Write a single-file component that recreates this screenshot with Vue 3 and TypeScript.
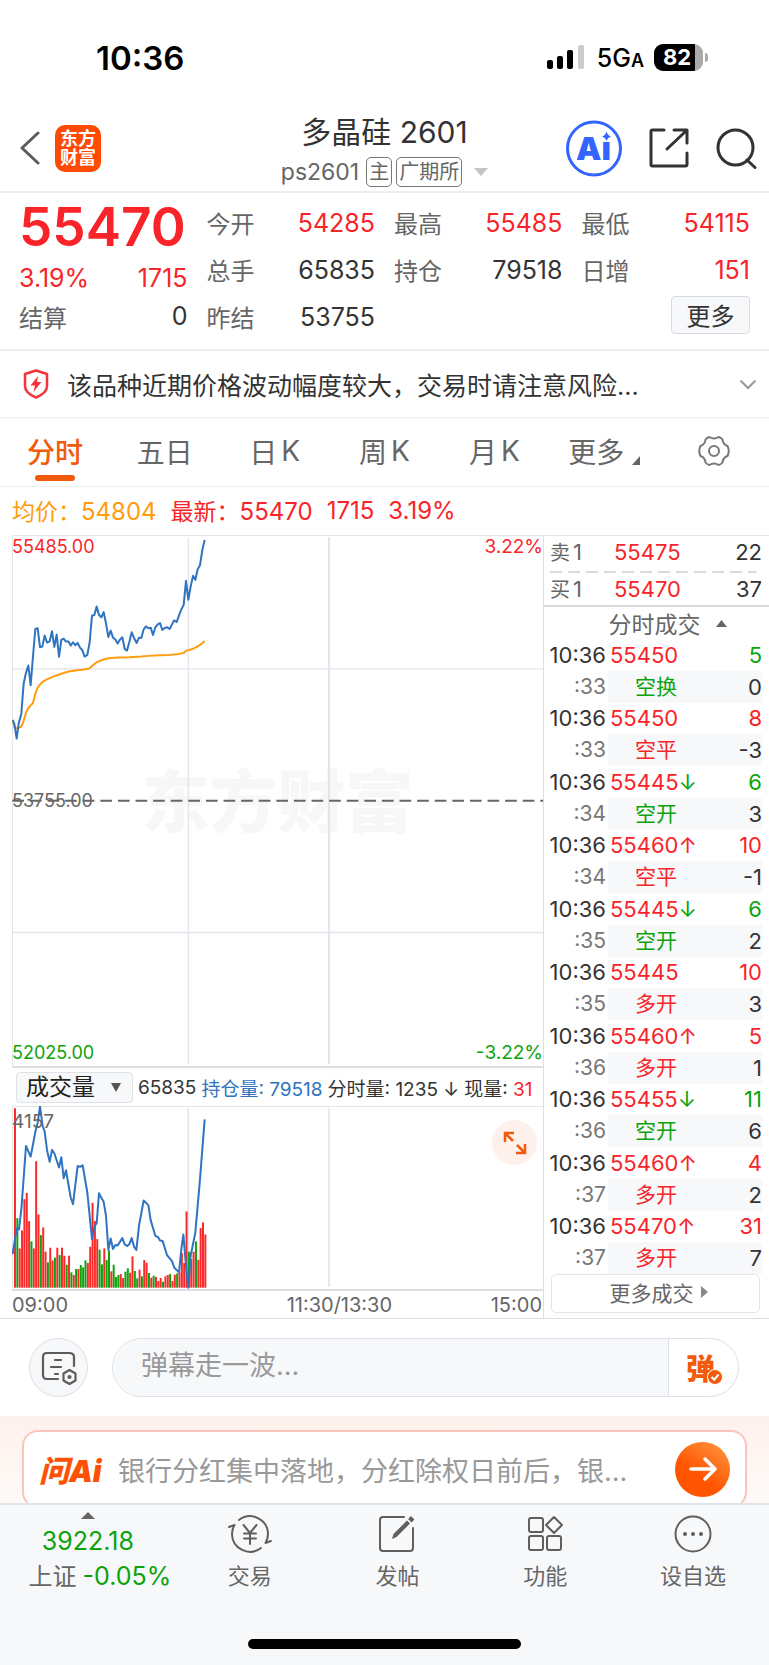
<script setup lang="ts">
import { ref } from 'vue'

type Tone = 'red' | 'green' | 'dark'

interface Quote {
  label: string
  value: string
  tone: Tone
}

interface Trade {
  price: string
  arrow: '' | '↑' | '↓'
  volume: string
  volumeTone: Tone
  second: string
  kind: string
  kindTone: Tone
  change: string
}

const quoteColumns: Quote[][] = [
  [
    { label: '今开', value: '54285', tone: 'red' },
    { label: '总手', value: '65835', tone: 'dark' },
    { label: '昨结', value: '53755', tone: 'dark' },
  ],
  [
    { label: '最高', value: '55485', tone: 'red' },
    { label: '持仓', value: '79518', tone: 'dark' },
  ],
  [
    { label: '最低', value: '54115', tone: 'red' },
    { label: '日增', value: '151', tone: 'red' },
  ],
]

const tabs = [
  { name: '分时', unit: '' },
  { name: '五日', unit: '' },
  { name: '日', unit: 'K' },
  { name: '周', unit: 'K' },
  { name: '月', unit: 'K' },
  { name: '更多', unit: '' },
]
const activeTab = ref('分时')
const indicator = ref('成交量')
const comment = ref('')

const book = [
  { side: '卖', price: '55475', size: '22' },
  { side: '买', price: '55470', size: '37' },
]

const trades: Trade[] = [
  { price: '55450', arrow: '', volume: '5', volumeTone: 'green', second: ':33', kind: '空换', kindTone: 'green', change: '0' },
  { price: '55450', arrow: '', volume: '8', volumeTone: 'red', second: ':33', kind: '空平', kindTone: 'red', change: '-3' },
  { price: '55445', arrow: '↓', volume: '6', volumeTone: 'green', second: ':34', kind: '空开', kindTone: 'green', change: '3' },
  { price: '55460', arrow: '↑', volume: '10', volumeTone: 'red', second: ':34', kind: '空平', kindTone: 'red', change: '-1' },
  { price: '55445', arrow: '↓', volume: '6', volumeTone: 'green', second: ':35', kind: '空开', kindTone: 'green', change: '2' },
  { price: '55445', arrow: '', volume: '10', volumeTone: 'red', second: ':35', kind: '多开', kindTone: 'red', change: '3' },
  { price: '55460', arrow: '↑', volume: '5', volumeTone: 'red', second: ':36', kind: '多开', kindTone: 'red', change: '1' },
  { price: '55455', arrow: '↓', volume: '11', volumeTone: 'green', second: ':36', kind: '空开', kindTone: 'green', change: '6' },
  { price: '55460', arrow: '↑', volume: '4', volumeTone: 'red', second: ':37', kind: '多开', kindTone: 'red', change: '2' },
  { price: '55470', arrow: '↑', volume: '31', volumeTone: 'red', second: ':37', kind: '多开', kindTone: 'red', change: '7' },
]

const priceLine =
  '38,572 43,583 50,628 56,583 64,553 71,462 78,430 85,408 92,467 99,380 106,298 113,296 120,353 127,351 134,318 141,339 149,335 156,305 163,352 170,315 177,382 184,331 191,327 198,336 206,336 212,348 219,338 226,347 233,340 240,354 247,362 254,381 262,376 269,338 276,258 283,256 290,230 297,256 304,263 311,247 318,282 325,322 332,303 339,324 346,330 353,342 360,330 367,323 374,358 381,363 388,337 395,308 402,325 410,340 417,324 424,325 431,299 438,290 445,296 452,294 459,316 466,293 473,284 480,280 487,301 494,295 502,293 509,298 516,284 522,272 530,277 537,257 544,239 551,226 558,153 565,210 572,170 579,138 586,150 593,118 600,106 607,60 614,30'
const averageLine =
  '38,574 44,596 52,597 64,592 71,574 78,550 85,536 92,528 99,521 106,493 113,475 120,465 128,457 135,453 149,446 163,440 184,433 206,426 226,423 247,421 268,417 278,408 290,398 311,390 325,386 353,384 388,383 424,381 445,379 480,377 509,376 537,373 551,370 558,364 572,360 586,354 600,346 614,334'
const interestLine =
  '38,585 50,508 57,511 64,450 70,370 78,260 92,292 106,218 113,190 120,141 128,200 134,217 141,272 149,308 156,272 163,282 177,325 184,294 191,357 198,333 212,415 219,435 233,320 240,323 248,318 262,400 276,540 283,504 290,492 297,402 304,416 311,428 318,470 325,572 332,538 339,570 346,558 353,559 367,537 374,556 382,561 388,555 395,537 402,562 409,573 417,500 431,424 445,438 452,483 466,530 474,534 480,544 488,546 501,588 516,606 523,626 537,640 544,570 550,526 558,620 565,686 572,590 586,520 600,360 614,180'

const barTops: string[] =
  '147r 477g 568r 514r 420r 401r 486r 547g 568r 306r 466r 528g 505r 578r 610g 566r 604r 596g 566r 588g 566r 590r 617g 590r 640g 648r 630g 630r 618g 625g 604g 612r 563r 431r 486r 540r 572g 616g 568r 603g 574g 637r 617g 654g 648g 645r 657r 638g 628g 641r 592r 636g 658g 632r 652g 603r 611r 642g 656r 650g 654r 666r 657r 668g 652r 648r 645g 666r 647r 643g 640r 582r 612r 457r 578g 600r 578r 547g 602r 507r 490r 526r'.split(' ')

const bars = barTops.map((entry, i) => {
  const top = parseInt(entry, 10)
  return { x: 42 + i * 7.05, y: top, h: 686 - top, fill: entry.endsWith('g') ? '#0ca30c' : '#fa2a2a' }
})
</script>

<template>
  <div class="page">
    <div class="status">
      <time class="clock">10:36</time>
      <div class="status-right">
        <svg class="signal" viewBox="0 0 38 25" aria-hidden="true">
          <rect x="0" y="15" width="6" height="9" rx="2" />
          <rect x="10" y="11" width="6" height="13" rx="2" />
          <rect x="20" y="5" width="6" height="19" rx="2" />
          <rect x="31" y="0" width="6" height="24" rx="2" fill="#ccc" />
        </svg>
        <span class="network">5G<small>A</small></span>
        <span class="battery"><span class="level">82</span></span>
      </div>
    </div>

    <header class="header">
      <div class="header-left">
        <button class="plain" aria-label="返回">
          <svg width="20" height="34" viewBox="0 0 20 34"><path d="M18 2 2 17 18 32" fill="none" stroke="#5c5c5c" stroke-width="3" stroke-linecap="round" stroke-linejoin="round" /></svg>
        </button>
        <a class="brand" href="#"><span>东方</span><span>财富</span></a>
      </div>
      <div class="title">
        <h1>多晶硅 2601</h1>
        <div class="subtitle">
          <span class="code">ps2601</span><span class="tag">主</span><span class="tag">广期所</span>
          <svg class="down" width="14" height="8" viewBox="0 0 14 8"><path d="M0 0H14L7 8Z" fill="#c4c4c4" /></svg>
        </div>
      </div>
      <div class="header-right">
        <button class="plain" aria-label="AI 助手">
          <svg width="56" height="57" viewBox="0 0 56 57">
            <circle cx="28" cy="28.500" r="26.500" fill="#fff" stroke="#3464ff" stroke-width="3" />
            <text x="10" y="40" font-size="32" font-weight="900" fill="#3464ff" font-family="Inter, sans-serif">Ai</text>
            <rect x="34" y="12" width="12" height="10" fill="#fff" />
            <path d="M40.500 11.500Q41.500 15.500 45 16.500Q41.500 17.500 40.500 21Q39.500 17.500 36 16.500Q39.500 15.500 40.500 11.500Z" fill="#3464ff" />
          </svg>
        </button>
        <button class="plain" aria-label="分享">
          <svg width="40" height="40" viewBox="0 0 40 40" fill="none" stroke="#333" stroke-width="3" stroke-linecap="round" stroke-linejoin="round">
            <path d="M15 2H3.500Q2 2 2 3.500V36.500Q2 38 3.500 38H36.500Q38 38 38 36.500V25M25 2H38V15M37 3 18 21" />
          </svg>
        </button>
        <button class="plain" aria-label="搜索">
          <svg width="41" height="41" viewBox="0 0 41 41" fill="none" stroke="#333" stroke-width="3" stroke-linecap="round">
            <circle cx="19.500" cy="19.500" r="17.500" /><path d="M31 32 39 39.500" />
          </svg>
        </button>
      </div>
    </header>

    <section class="quote">
      <div class="quote-main">
        <strong>55470</strong>
        <div class="pair delta red"><span>3.19%</span><span>1715</span></div>
        <div class="pair settle"><span class="label">结算</span><span class="dark">0</span></div>
      </div>
      <div v-for="(column, i) in quoteColumns" :key="i" class="quote-col">
        <div v-for="q in column" :key="q.label" class="pair">
          <span class="label">{{ q.label }}</span><span :class="q.tone">{{ q.value }}</span>
        </div>
        <button v-if="i === 2" class="more">更多</button>
      </div>
    </section>

    <section class="notice">
      <svg width="26" height="30" viewBox="0 0 26 30"><path d="M13 1.500 24 5V17Q24 24 13 28.500Q2 24 2 17V5Z" fill="none" stroke="#f5333a" stroke-width="2.500" stroke-linejoin="round" /><path d="M15 7 7.500 16.500H12L10.500 23 18.500 13H14Z" fill="#f5333a" /></svg>
      <p>该品种近期价格波动幅度较大，交易时请注意风险...</p>
      <button class="plain" aria-label="展开">
        <svg width="18" height="11" viewBox="0 0 18 11"><path d="M1.500 1.500 9 9 16.500 1.500" fill="none" stroke="#999" stroke-width="2" /></svg>
      </button>
    </section>

    <nav class="tabs">
      <button v-for="tab in tabs" :key="tab.name" :class="{ active: tab.name === activeTab }" @click="activeTab = tab.name">
        {{ tab.name }}<span v-if="tab.unit">{{ tab.unit }}</span><svg v-if="tab.name === '更多'" width="8" height="9" viewBox="0 0 8 9"><path d="M8 0V9H0Z" fill="#666" /></svg>
      </button>
      <button aria-label="设置">
        <svg width="34" height="32" viewBox="0 0 34 32" fill="none" stroke="#777" stroke-width="2" stroke-linejoin="round">
          <path d="M12.500 2Q17 5 21.500 2Q24 2.500 25.500 4.500Q26 9.500 30.500 11Q33 16 30.500 21Q26 22.500 25.500 27.500Q24 29.500 21.500 30Q17 27 12.500 30Q10 29.500 8.500 27.500Q8 22.500 3.500 21Q1 16 3.500 11Q8 9.500 8.500 4.500Q10 2.500 12.500 2Z" />
          <circle cx="17" cy="16" r="5" />
        </svg>
      </button>
    </nav>

    <div class="legend">
      <span class="orange">均价：<b>54804</b></span><span>最新：<b>55470</b></span><b>1715</b><b>3.19%</b>
    </div>

    <main class="market">
      <section class="charts">
        <div class="price-chart">
          <span class="watermark">东方财富</span>
          <svg viewBox="36 15 1593 1599" preserveAspectRatio="none" aria-label="分时走势">
            <g stroke="#e3e5ec" stroke-width="6">
              <path d="M36 418H1629M36 1212H1629M565 21V1608" stroke-width="4" /><path d="M987 21V1608" />
            </g>
            <path d="M37 815H1629" stroke="#666" stroke-width="6" stroke-dasharray="35 17.800" />
            <g fill="none" stroke-linejoin="round">
              <polyline :points="averageLine" stroke="#ff9c0f" stroke-width="6" />
              <polyline :points="priceLine" stroke="#2f74c0" stroke-width="6" />
            </g>
          </svg>
          <span class="mark top left red">55485.00</span>
          <span class="mark top right red">3.22%</span>
          <span class="mark middle left">53755.00</span>
          <span class="mark bottom left green">52025.00</span>
          <span class="mark bottom right green">-3.22%</span>
        </div>
        <div class="volume-bar">
          <label class="picker">
            <select v-model="indicator" aria-label="指标"><option>成交量</option></select>
            <svg width="10" height="9" viewBox="0 0 10 9"><path d="M0 0H10L5 9Z" fill="#555" /></svg>
          </label>
          <span>65835</span><span class="blue">持仓量: 79518</span><span>分时量: 1235 ↓</span><span>现量: <b>31</b></span>
        </div>
        <div class="volume-chart">
          <svg viewBox="36 140 1593 550" preserveAspectRatio="none" aria-label="成交量">
            <path d="M565 147V684M987 147V684" stroke="#e3e5ec" stroke-width="5" />
            <rect v-for="bar in bars" :key="bar.x" :x="bar.x" :y="bar.y" width="6" :height="bar.h" :fill="bar.fill" />
            <polyline :points="interestLine" fill="none" stroke="#2f74c0" stroke-width="6" stroke-linejoin="round" />
          </svg>
          <span class="peak">4157</span>
          <button class="expand" aria-label="全屏">
            <svg width="24" height="24" viewBox="0 0 24 24" fill="none" stroke="#f25a0c" stroke-width="2.500"><path d="M2 11V2H11M2 2 10 10M22 13V22H13M22 22 14 14" /></svg>
          </button>
        </div>
        <div class="axis"><span>09:00</span><span>11:30/13:30</span><span>15:00</span></div>
      </section>

      <aside class="panel">
        <table class="book">
          <tbody>
            <tr v-for="row in book" :key="row.side">
              <th>{{ row.side }}<span>1</span></th><td class="red">{{ row.price }}</td><td class="num">{{ row.size }}</td>
            </tr>
          </tbody>
        </table>
        <button class="trades-head">分时成交<svg width="11" height="7" viewBox="0 0 11 7"><path d="M0 7H11L5.500 0Z" fill="#666" /></svg></button>
        <table class="trades">
          <tbody>
            <template v-for="(t, i) in trades" :key="i">
              <tr>
                <th>10:36</th>
                <td class="red">{{ t.price }}<i v-if="t.arrow" :class="t.arrow === '↑' ? 'red' : 'green'">{{ t.arrow }}</i></td>
                <td class="num" :class="t.volumeTone">{{ t.volume }}</td>
              </tr>
              <tr class="detail">
                <th>{{ t.second }}</th>
                <td class="kind" :class="t.kindTone">{{ t.kind }}</td>
                <td class="num">{{ t.change }}</td>
              </tr>
            </template>
          </tbody>
        </table>
        <button class="more-trades">更多成交<svg width="7" height="12" viewBox="0 0 7 12"><path d="M0 0V12L7 6Z" fill="#888" /></svg></button>
      </aside>
    </main>

    <section class="chat">
      <button class="round" aria-label="弹幕设置">
        <svg width="36" height="34" viewBox="0 0 36 34" fill="none" stroke="#5c5c5c" stroke-width="2.200" stroke-linecap="round" stroke-linejoin="round">
          <path d="M17 28H6Q2 28 2 24V6Q2 2 6 2H28Q33 2 33 6V15M14 9H20M10 16H20M14 23H17" />
          <path d="M28.500 19 34.500 22.500V29.500L28.500 33 22.500 29.500V22.500Z" /><circle cx="28.500" cy="26" r="1" />
        </svg>
      </button>
      <div class="pill">
        <input v-model="comment" type="text" placeholder="弹幕走一波..." aria-label="弹幕" />
        <button aria-label="弹幕开关">
          <span class="dan">弹</span>
          <svg width="16" height="16" viewBox="0 0 16 16"><circle cx="8" cy="8" r="7.500" fill="#f25a0c" stroke="#fff" /><path d="M4.500 8 7.200 10.800 11.500 5.500" fill="none" stroke="#fff" stroke-width="2" /></svg>
        </button>
      </div>
    </section>

    <section class="ask">
      <div class="ask-card">
        <span class="ask-logo">问Ai</span>
        <p>银行分红集中落地，分红除权日前后，银...</p>
        <button aria-label="提问">
          <svg width="28" height="24" viewBox="0 0 28 24"><path d="M2 12H26M16 2 26 12 16 22" fill="none" stroke="#fff" stroke-width="3.500" stroke-linecap="round" stroke-linejoin="round" /></svg>
        </button>
      </div>
    </section>

    <footer class="dock">
      <a class="index" href="#">
        <svg width="14" height="7" viewBox="0 0 14 7"><path d="M0 7H14L7 0Z" fill="#666" /></svg>
        <span class="points green">3922.18</span>
        <span class="rate">上证<span class="green">-0.05%</span></span>
      </a>
      <a class="item" href="#">
        <svg width="44" height="38" viewBox="0 0 44 38" fill="none" stroke="#5f5f5f" stroke-width="2" stroke-linecap="round" stroke-linejoin="round">
          <path d="M11 5A18 18 0 0 1 40 19Q40 24 37.500 28L43 26M33 33A18 18 0 0 1 4 19Q4 14 6.500 10L1 12M15.500 10 22 18 28.500 10M22 18V29M16 18.500H28M16 23.500H28" />
        </svg>
        <span>交易</span>
      </a>
      <a class="item" href="#">
        <svg width="38" height="38" viewBox="0 0 38 38" fill="none" stroke="#5f5f5f" stroke-width="2" stroke-linecap="round">
          <path d="M26 2H5Q2 2 2 5V33Q2 36 5 36H32Q35 36 35 33V13" />
          <path d="M14 24 15.500 19 29 5.500 32 8.500 18.500 22Z" fill="#5f5f5f" stroke="none" /><path d="M31.500 4 33 2.500 35 4.500 33.500 6Z" fill="#5f5f5f" />
        </svg>
        <span>发帖</span>
      </a>
      <a class="item" href="#">
        <svg width="36" height="38" viewBox="0 0 36 38" fill="none" stroke="#5f5f5f" stroke-width="2" stroke-linejoin="round">
          <rect x="2" y="3" width="14" height="14" rx="2" /><rect x="2" y="21" width="14" height="14" rx="2" /><rect x="20" y="21" width="14" height="14" rx="2" /><path d="M27 2 35 10 27 18 19 10Z" />
        </svg>
        <span>功能</span>
      </a>
      <a class="item" href="#">
        <svg width="38" height="38" viewBox="0 0 38 38"><circle cx="19" cy="19" r="17.500" fill="none" stroke="#5f5f5f" stroke-width="2" /><g fill="#5f5f5f"><circle cx="11" cy="19" r="2" /><circle cx="19" cy="19" r="2" /><circle cx="27" cy="19" r="2" /></g></svg>
        <span>设自选</span>
      </a>
      <div class="home-bar"></div>
    </footer>
  </div>
</template>

<style>
body {
  margin: 0;
  background: #fff;
}
</style>

<style scoped>
.page {
  font-family: Inter, "Noto Sans CJK SC", sans-serif;
  font-size: 24px;
  color: #333;
  overflow: hidden;
}
.page *,
.page {
  box-sizing: border-box;
}
button {
  font: inherit;
  color: inherit;
  border: 0;
  padding: 0;
  margin: 0;
  background: none;
}
a {
  color: inherit;
  text-decoration: none;
}
svg {
  display: block;
  flex: none;
}
p,
h1 {
  margin: 0;
  font-weight: 400;
}
.plain {
  display: flex;
}
.red {
  color: #f82429;
}
.green {
  color: #0ca30c;
}
.dark {
  color: #333;
}
.label {
  color: #666;
}

.status {
  height: 105px;
  padding: 10px 66px 0 96px;
  display: flex;
  align-items: center;
  justify-content: space-between;
  color: #000;
}
.clock {
  font-size: 33px;
  font-weight: 600;
}
.status-right {
  display: flex;
  align-items: center;
}
.signal {
  width: 38px;
  height: 25px;
}
.network {
  margin: 0 10px 0 12px;
  font-size: 25px;
  font-weight: 500;
}
.network small {
  font-size: 18px;
  font-weight: 600;
}
.battery {
  position: relative;
  width: 49px;
  height: 27px;
  border-radius: 9px;
  background: linear-gradient(90deg, #000 41px, #aaa 41px);
}
.battery::after {
  content: "";
  position: absolute;
  left: 51px;
  top: 9px;
  width: 3px;
  height: 9px;
  border-radius: 0 3px 3px 0;
  background: #aaa;
}
.level {
  display: block;
  padding-right: 3px;
  text-align: center;
  color: #fff;
  font-size: 22px;
  font-weight: 700;
  line-height: 27px;
}

.header {
  display: grid;
  grid-template-columns: 1fr auto 1fr;
  align-items: center;
  height: 88px;
  padding: 0 12px;
  border-bottom: 2px solid #eee;
}
.header-left,
.header-right {
  display: flex;
  align-items: center;
}
.header-left {
  gap: 15px;
  padding-left: 8px;
}
.header-right {
  justify-content: flex-end;
  gap: 27px;
}
.brand {
  width: 46px;
  height: 47px;
  border-radius: 10px;
  background: #ff4a03;
  color: #fff;
  font-size: 18px;
  font-weight: 700;
  line-height: 19px;
  display: flex;
  flex-direction: column;
  align-items: center;
  justify-content: center;
}
.title {
  display: flex;
  flex-direction: column;
  align-items: center;
  padding-top: 5px;
}
h1 {
  font-size: 30px;
  line-height: 42px;
}
.subtitle {
  display: flex;
  align-items: center;
  gap: 4px;
  height: 38px;
  color: #666;
}
.code {
  font-size: 23px;
  margin-right: 3px;
}
.tag {
  font-size: 20px;
  line-height: 28px;
  padding: 0 2px;
  border: 1px solid #777;
  border-radius: 5px;
}
.down {
  margin-left: 8px;
}

.quote {
  display: grid;
  grid-template-columns: repeat(4, 1fr);
  gap: 19px;
  height: 158px;
  padding: 6px 19px 0;
  border-bottom: 2px solid #eee;
}
.quote-main {
  display: flex;
  flex-direction: column;
}
.quote strong {
  font-size: 53px;
  line-height: 56px;
  font-weight: 600;
  color: #f82429;
}
.pair {
  display: flex;
  align-items: center;
  justify-content: space-between;
  height: 47px;
}
.pair span:not(.label) {
  font-size: 25px;
}
.delta {
  height: 46px;
}
.settle {
  height: 30px;
}
.quote-col {
  display: flex;
  flex-direction: column;
}
.more {
  align-self: flex-end;
  width: 79px;
  height: 38px;
  margin-top: 3px;
  padding-bottom: 2px;
  border: 1px solid #d9dbe2;
  border-radius: 4px;
  background: #f7f8fa;
}

.notice {
  display: flex;
  align-items: center;
  height: 68px;
  padding: 0 12px 0 23px;
  border-bottom: 2px solid #f4f4f4;
}
.notice p {
  flex: 1;
  margin-left: 18px;
  font-size: 25px;
  white-space: nowrap;
}

.tabs {
  display: grid;
  grid-template-columns: repeat(7, 1fr);
  height: 68px;
  border-bottom: 1px solid #eee;
  color: #666;
  font-size: 28px;
}
.tabs button {
  position: relative;
  display: flex;
  align-items: center;
  justify-content: center;
  padding-bottom: 4px;
}
.tabs button span {
  margin-left: 4px;
}
.tabs button:nth-child(6) svg {
  margin: 20px 0 0 8px;
}
.tabs .active {
  color: #f25a0c;
  font-weight: 500;
}
.tabs .active::after {
  content: "";
  position: absolute;
  left: 50%;
  bottom: 5px;
  width: 40px;
  height: 6px;
  margin-left: -20px;
  border-radius: 3px;
  background: #f25a0c;
}

.legend {
  display: flex;
  align-items: center;
  gap: 14px;
  height: 48px;
  padding: 0 0 2px 12px;
  font-size: 23px;
  color: #f82429;
}
.legend b {
  font-size: 24px;
  font-weight: 400;
}
.orange {
  color: #ff9c0f;
}

.market {
  display: grid;
  grid-template-columns: 1fr 225px;
  border-bottom: 1px solid #dcdee4;
}
.charts {
  margin-left: 12px;
  border-right: 1px solid #dcdee4;
}
.price-chart {
  position: relative;
  height: 533px;
  box-shadow: inset 1px 1px #e3e5e9;
  border-bottom: 2px solid #dcdfe4;
}
.price-chart > svg,
.volume-chart > svg {
  position: absolute;
  inset: 0;
  width: 100%;
  height: 100%;
}
.watermark {
  position: absolute;
  inset: 0;
  display: flex;
  align-items: center;
  justify-content: center;
  padding-bottom: 6px;
  font-size: 68px;
  font-weight: 900;
  color: #f7f7f7;
}
.mark {
  position: absolute;
  font-size: 18px;
  line-height: 22px;
}
.mark.middle {
  color: #666;
  top: 255px;
}
.top {
  top: 1px;
}
.bottom {
  bottom: 2px;
}
.left {
  left: 0;
}
.mark.right {
  right: 0;
  font-size: 19px;
}
.volume-bar {
  display: flex;
  align-items: center;
  gap: 5px;
  height: 38px;
  padding-left: 4px;
  font-size: 19px;
  white-space: nowrap;
}
.volume-bar b {
  font-weight: 400;
  color: #f82429;
}
.blue {
  color: #2f74c0;
}
.picker {
  display: flex;
  align-items: center;
  width: 117px;
  height: 31px;
  padding: 0 11px 0 9px;
  border: 1px solid #dfe1e7;
  border-radius: 4px;
  background: #f7f8fa;
}
.picker select {
  flex: 1;
  min-width: 0;
  appearance: none;
  border: 0;
  padding: 0;
  background: none;
  font: inherit;
  font-size: 23px;
  line-height: 28px;
  color: #222;
}
.volume-chart {
  position: relative;
  height: 185px;
  box-shadow: inset 1px 1px #e3e5e9;
  border-bottom: 2px solid #dcdfe4;
}
.peak {
  position: absolute;
  left: 0;
  top: 4px;
  font-size: 19px;
  color: #666;
}
.expand {
  position: absolute;
  right: 6px;
  top: 14px;
  width: 45px;
  height: 45px;
  border-radius: 50%;
  background: #fef0ea;
  display: flex;
  align-items: center;
  justify-content: center;
}
.axis {
  display: flex;
  justify-content: space-between;
  align-items: center;
  height: 27px;
  padding-right: 1px;
  font-size: 20px;
  color: #666;
}
.axis span:nth-child(2) {
  margin-left: 120px;
}

.panel {
  display: flex;
  flex-direction: column;
  border-top: 1px solid #e3e5e9;
}
table {
  border-collapse: collapse;
  table-layout: fixed;
  font-size: 22px;
}
th,
td {
  padding: 0;
  font-weight: 400;
  line-height: 24px;
}
.num {
  text-align: right;
}
td.num {
  padding-right: 7px;
}
.book {
  width: 100%;
  border-bottom: 2px solid #d8dae0;
}
.book tr {
  height: 35px;
}
.book tr:first-child > * {
  padding-bottom: 3px;
}
.book tr + tr > * {
  padding-top: 2px;
}
.book tr + tr {
  background: repeating-linear-gradient(90deg, #d8dae0 0 12px, transparent 12px 18px) 6px 0 / 206px 2px no-repeat;
}
.book th {
  width: 70px;
  padding-left: 6px;
  text-align: left;
  color: #666;
  font-size: 20px;
}
.book th span {
  margin-left: 3px;
  font-size: 22px;
}
.trades-head {
  display: flex;
  align-items: center;
  justify-content: center;
  gap: 15px;
  height: 32px;
  padding-left: 22px;
  font-size: 23px;
  color: #666;
}
.trades {
  height: 635px;
  margin: 0 7px 0 5px;
}
.trades th {
  width: 59px;
  padding-right: 2px;
  text-align: right;
}
.trades td {
  padding-left: 2px;
}
.trades td.num {
  width: 56px;
  padding: 0;
}
.trades i {
  font-style: normal;
}
.trades .detail th {
  font-size: 21px;
  color: #777;
}
.detail td {
  background: #f7f8fa;
}
.trades td.kind {
  padding-left: 27px;
  font-size: 21px;
}
.more-trades {
  display: flex;
  align-items: center;
  justify-content: center;
  gap: 7px;
  height: 39px;
  margin: 0 9px 0 7px;
  padding: 0 0 3px 6px;
  border: 1px solid #e3e5e9;
  border-radius: 5px;
  font-size: 21px;
  color: #666;
}

.chat {
  display: flex;
  align-items: center;
  gap: 24px;
  height: 97px;
  padding: 0 30px 0 29px;
}
.round {
  display: flex;
  align-items: center;
  justify-content: center;
  width: 59px;
  height: 59px;
  border: 1px solid #dcdfe6;
  border-radius: 50%;
  background: #f7f8fa;
}
.pill {
  flex: 1;
  display: flex;
  height: 59px;
  border: 1px solid #dcdfe6;
  border-radius: 30px;
  overflow: hidden;
}
.pill input {
  flex: 1;
  min-width: 0;
  border: 0;
  padding: 0 0 4px 28px;
  background: #f7f8fa;
  font: inherit;
  font-size: 27px;
}
.pill input::placeholder {
  color: #999;
  opacity: 1;
}
.pill button {
  display: flex;
  align-items: center;
  width: 70px;
  padding: 0 0 2px 17px;
  border-left: 1px solid #dcdfe6;
}
.dan {
  font-size: 29px;
  font-weight: 900;
  color: #f25a0c;
}
.pill svg {
  margin: 20px 0 0 -8px;
}

.ask {
  height: 87px;
  padding: 14px 22px 0;
  overflow: hidden;
  background: linear-gradient(#fef1ec, #fffaf8);
}
.ask-card {
  display: flex;
  align-items: center;
  height: 78px;
  padding: 0 15px;
  border: 2px solid #fbc5bb;
  border-bottom-color: #dfe0f5;
  border-radius: 16px;
  background: #fff;
}
.ask-logo {
  width: 79px;
  font-size: 30px;
  font-weight: 900;
  font-style: italic;
  color: #fd5205;
  white-space: nowrap;
}
.ask-card p {
  flex: 1;
  min-width: 0;
  font-size: 27px;
  color: #999;
  white-space: nowrap;
}
.ask-card button {
  display: flex;
  align-items: center;
  justify-content: center;
  width: 55px;
  height: 55px;
  border-radius: 50%;
  background: linear-gradient(215deg, #ff9a45, #ff5500 60%);
}

.dock {
  display: grid;
  grid-template-columns: 176fr repeat(4, 148fr);
  height: 162px;
  padding-right: 2px;
  border-top: 2px solid #e1e3e8;
  background: #f7f8fa;
  position: relative;
  color: #666;
}
.index,
.item {
  display: flex;
  flex-direction: column;
  align-items: center;
}
.index {
  padding-top: 7px;
}
.index svg {
  margin-bottom: 4px;
}
.points {
  font-size: 25px;
  line-height: 36px;
}
.rate {
  padding-left: 24px;
  line-height: 34px;
  white-space: nowrap;
}
.rate span {
  margin-left: 6px;
  font-size: 25px;
}
.item {
  padding-top: 10px;
  gap: 6px;
  font-size: 22px;
  line-height: 34px;
}
.home-bar {
  position: absolute;
  left: 50%;
  bottom: 16px;
  width: 273px;
  height: 10px;
  margin-left: -137px;
  border-radius: 5px;
  background: #000;
}
</style>
